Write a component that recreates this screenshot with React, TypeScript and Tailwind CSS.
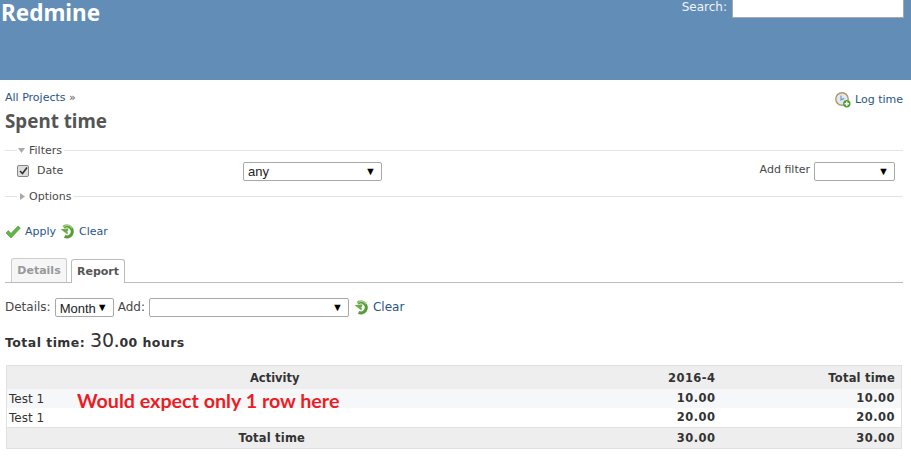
import React from "react";

const Refresh = () => (
  <svg width="15" height="15" viewBox="0 0 15 15" className="shrink-0">
    <path d="M3.6 3.2A5.4 5.4 0 1 1 4.6 12.4" fill="none" stroke="#5a9c3c" strokeWidth="3.2" />
    <path d="M3.6 3A5.2 5.2 0 0 1 12 4.2" fill="none" stroke="#a4d385" strokeWidth="1.3" />
    <path d="M0.6 5.2 L8.4 4.2 L7.6 10.6 Z" fill="#68ac46" />
    <circle cx="8.6" cy="7.6" r="1.2" fill="#ffffff" />
  </svg>
);

const Check = () => (
  <svg width="16" height="14" viewBox="0 0 16 14" className="shrink-0">
    <path d="M1 8 L3.4 5.6 L6 8.4 L13 1 L15.4 3 L6 13 Z" fill="#63b546" stroke="#44932f" strokeWidth="0.6" />
  </svg>
);

const Clock = () => (
  <svg width="16" height="16" viewBox="0 0 16 16" className="shrink-0">
    <circle cx="7" cy="7" r="6.2" fill="#dfe8f3" stroke="#b3975f" strokeWidth="1.4" />
    <path d="M6 3.6 V7.8 L9.2 6.4" fill="none" stroke="#6b8fc0" strokeWidth="1.1" />
    <circle cx="11.8" cy="11.8" r="3.7" fill="#4f9f35" />
    <path d="M11.8 9.6 V14 M9.6 11.8 H14" stroke="#fff" strokeWidth="1.4" />
  </svg>
);

const Arrow = () => <span className="text-[11px] leading-none text-black">▼</span>;

const Select = ({ w, children }: { w: string; children?: React.ReactNode }) => (
  <div className={`${w} flex h-[19px] items-center justify-between rounded-[2px] border border-[#a9a9a9] bg-white pl-[4px] pr-[5px] font-['Liberation_Sans',sans-serif] text-[13px] text-[#222]`}>
    <span className="pt-[1px]">{children}</span>
    <Arrow />
  </div>
);

const Row = ({ a, b, c, cls }: { a: string; b: string; c: string; cls: string }) => (
  <tr className={cls}>
    <td className="pl-[2px] pt-[1px] text-left text-[12px] font-normal">{a}</td>
    <td className="pr-[1px] pt-[1px] text-right text-[11.5px] font-bold tracking-[0.45px]">{b}</td>
    <td className="pr-[6px] pt-[1px] text-right text-[11.5px] font-bold tracking-[0.45px]">{c}</td>
  </tr>
);

export default function App() {
  return (
    <div className="h-[456px] w-[911px] overflow-hidden bg-white font-['DejaVu_Sans',Verdana,sans-serif] text-[11px] text-[#484848]">
      <header className="flex h-[80px] items-start justify-between bg-[#628db6] text-white">
        <h1 className="ml-[1px] font-['Noto_Sans',sans-serif] text-[22.5px] font-bold leading-[25px]">Redmine</h1>
        <div className="mr-[7px] flex items-start">
          <span className="mr-[5px] text-[12px] leading-[14px] text-[#f0f4f8]">Search:</span>
          <div className="h-[18px] w-[172px] border border-t-0 border-[#a9a9a9] bg-white" />
        </div>
      </header>

      <main className="px-[5px]">
        <div className="flex items-start justify-between pr-[3px] pt-[11px]">
          <div className="leading-[14px] text-[#2a5685]">
            All Projects <span className="text-[#555]">»</span>
          </div>
          <div className="flex items-center gap-[4px] pt-[1px] text-[#2a5685]">
            <Clock />
            <span className="leading-[14px]">Log time</span>
          </div>
        </div>

        <h2 className="mt-[1px] font-['Noto_Sans',sans-serif] text-[18.8px] font-bold leading-[24px] text-[#555]">Spent time</h2>

        <fieldset className="mt-[11px] w-[898px] border-t border-[#e4e4e4] pl-[12px]">
          <legend className="flex items-center gap-[3px] pr-[2px] leading-[13px] text-[#484848]">
            <svg width="9" height="7" viewBox="0 0 9 7"><path d="M1 1 H8 L4.5 6 Z" fill="#aaa" /></svg>
            Filters
          </legend>
          <div className="flex h-[27px] items-start pt-[5px]">
            <div className="flex w-[226px] items-center gap-[8px] pt-[2px]">
              <span className="flex h-[12px] w-[12px] items-center justify-center rounded-[2px] border border-[#888] bg-[#ddd]">
                <svg width="9" height="9" viewBox="0 0 9 9"><path d="M1 5 L3.5 7.5 L8 1.5" fill="none" stroke="#333" strokeWidth="1.6" /></svg>
              </span>
              <span className="leading-[13px]">Date</span>
            </div>
            <Select w="w-[139px]">any</Select>
            <div className="ml-auto mr-[8px] flex items-start gap-[4px]">
              <span className="pt-[1px] leading-[14px]">Add filter</span>
              <Select w="w-[81px]" />
            </div>
          </div>
        </fieldset>

        <fieldset className="mt-[6px] w-[898px] border-t border-[#e4e4e4] pl-[12px]">
          <legend className="flex items-center gap-[3px] pl-[2px] pr-[2px] leading-[13px]">
            <svg width="7" height="9" viewBox="0 0 7 9"><path d="M1 1 V8 L6 4.5 Z" fill="#aaa" /></svg>
            Options
          </legend>
        </fieldset>

        <div className="mt-[21px] flex items-center leading-[14px] text-[#2a5685]">
          <Check />
          <span className="ml-[4px]">Apply</span>
          <span className="ml-[4px]"><Refresh /></span>
          <span className="ml-[4px]">Clear</span>
        </div>

        <div className="mt-[20px] flex h-[24px] w-[898px] items-end gap-[4px] border-b border-[#bbb] pl-[6px]">
          <div className="flex h-[24px] w-[56px] items-center justify-center rounded-t-[3px] border border-b-0 border-[#ccc] bg-[#f6f6f6] pt-[1px] font-bold text-[#999]">Details</div>
          <div className="relative top-[1px] flex h-[24px] w-[54px] items-center justify-center rounded-t-[3px] border border-b-0 border-[#bbb] bg-white pt-[1px] font-bold text-[#555]">Report</div>
        </div>

        <div className="mt-[15px] flex items-center text-[12px] leading-[19px]">
          <span>Details:</span>
          <div className="ml-[4px]"><Select w="w-[59px]">Month</Select></div>
          <span className="ml-[4px]">Add:</span>
          <div className="ml-[4px]"><Select w="w-[200px]" /></div>
          <span className="ml-[5px]"><Refresh /></span>
          <span className="ml-[4px] text-[#2a5685]">Clear</span>
        </div>

        <p className="mt-[14px] flex items-baseline text-[12.5px] font-bold leading-[24px] tracking-[0.45px] text-[#333]">
          Total time:&nbsp;<span className="text-[19px] font-normal leading-none tracking-normal">30</span><span>.00</span>&nbsp;hours
        </p>

        <div className="relative ml-[1px] mt-[10px] w-[896px]">
          <table className="w-full table-fixed border-collapse border border-[#e0e0e0] text-[#333]">
            <colgroup>
              <col className="w-[536px]" />
              <col className="w-[174px]" />
              <col />
            </colgroup>
            <tbody>
              <tr className="h-[23px] bg-[#eeeeee] text-[11.5px] font-bold">
                <td className="pt-[2px] text-center">Activity</td>
                <td className="pr-[1px] pt-[2px] text-right tracking-[0.45px]">2016-4</td>
                <td className="pr-[6px] pt-[2px] text-right tracking-[0.2px]">Total time</td>
              </tr>
              <Row a="Test 1" b="10.00" c="10.00" cls="h-[19px] bg-[#f6f7f8]" />
              <Row a="Test 1" b="20.00" c="20.00" cls="h-[19px] bg-white" />
              <tr className="h-[21px] border-t border-[#e0e0e0] bg-[#eeeeee] text-[11.5px] font-bold">
                <td className="pr-[6px] pt-[2px] text-center tracking-[0.2px]">Total time</td>
                <td className="pr-[1px] pt-[2px] text-right tracking-[0.45px]">30.00</td>
                <td className="pr-[6px] pt-[2px] text-right tracking-[0.45px]">30.00</td>
              </tr>
            </tbody>
          </table>
          <div className="absolute left-[71px] top-[23px] font-['Lato',sans-serif] text-[19.7px] font-bold leading-[25px] text-[#ed1c24]">
            Would expect only 1 row here
          </div>
        </div>
      </main>
    </div>
  );
}
